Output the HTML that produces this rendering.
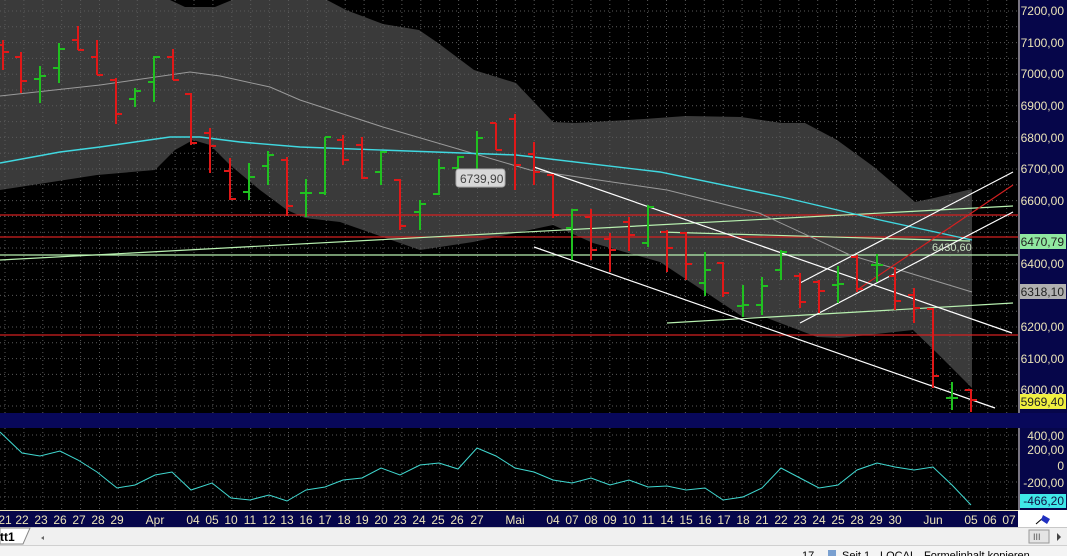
<!DOCTYPE html>
<html><head><meta charset="utf-8"><style>
html,body{margin:0;padding:0;width:1067px;height:556px;overflow:hidden;background:#000;font-family:"Liberation Sans",sans-serif}
svg{position:absolute;left:0;top:0}
.ax{font-family:"Liberation Sans",sans-serif;font-size:12px;fill:#ece4b8}
</style></head><body>
<svg width="1067" height="556" xmlns="http://www.w3.org/2000/svg">
<rect width="1067" height="556" fill="#000"/>
<!-- band -->
<polygon fill="#3a3a3a" points="0,0 170,0 185,7 215,7 232,0 327,0 346,10 383,24 419,30 438,43 474,70 516,83 553,122 575,123 644,119 686,116 741,117 782,123 805,123 837,140 874,167 915,202 934,198 972,189 972,388 937,353 913,330 840,338 817,337 767,318 743,317 660,262 593,243 553,225 473,242 420,250 340,222 305,218 287,210 260,190 230,165 210,145 193,140 175,150 155,170 97,175 0,190"/>
<g id="grid"></g>
<!-- horizontal lines -->
<line x1="0" y1="215" x2="1018" y2="215" stroke="#d42020" stroke-width="1.3"/>
<line x1="0" y1="237" x2="1018" y2="237" stroke="#d42020" stroke-width="1.3"/>
<line x1="0" y1="335" x2="1018" y2="335" stroke="#d42020" stroke-width="1.3"/>
<line x1="0" y1="255" x2="1018" y2="255" stroke="#b8f0b0" stroke-width="1.2"/>
<line x1="0" y1="260" x2="1013" y2="206" stroke="#b8f0b0" stroke-width="1.2"/>
<line x1="660" y1="232" x2="970" y2="241" stroke="#b8f0b0" stroke-width="1.2"/>
<line x1="667" y1="323" x2="1013" y2="303" stroke="#b8f0b0" stroke-width="1.2"/>
<polyline fill="none" stroke="#9a9a9a" stroke-width="1" points="0,96 100,85 190,72 220,76 270,87 300,100 383,127 530,170 667,190 759,213 850,255 972,292"/>
<polyline fill="none" stroke="#40d8e0" stroke-width="1.4" points="0,163 60,152 100,147 170,137 200,137 240,142 300,147 516,155 660,172 782,197 880,220 972,240"/>
<line x1="857" y1="290" x2="1013" y2="185" stroke="#d42020" stroke-width="1.2"/>
<line x1="534" y1="167" x2="1012" y2="333" stroke="#fff" stroke-width="1.2"/>
<line x1="534" y1="247" x2="995" y2="408" stroke="#fff" stroke-width="1.2"/>
<line x1="800" y1="283" x2="1013" y2="172" stroke="#fff" stroke-width="1.2"/>
<line x1="800" y1="323" x2="1013" y2="212" stroke="#fff" stroke-width="1.2"/>
<g id="bars"></g>
<rect x="456" y="169" width="49" height="18" rx="3" fill="#d8d8d8" stroke="#aaa"/>
<text x="460" y="183" font-size="12" fill="#444" font-family="Liberation Sans">6739,90</text>
<text x="932" y="251" font-size="11" fill="#c8e0c0" font-family="Liberation Sans">6430,60</text>
<!-- right axis -->
<rect x="1018" y="0" width="49" height="413" fill="#06064a"/>
<line x1="1019" y1="0" x2="1019" y2="413" stroke="#ece4b8"/>
<g class="ax" text-anchor="end">
<text x="1064" y="15">7200,00</text><text x="1064" y="47">7100,00</text><text x="1064" y="78">7000,00</text><text x="1064" y="110">6900,00</text><text x="1064" y="142">6800,00</text><text x="1064" y="173">6700,00</text><text x="1064" y="205">6600,00</text><text x="1064" y="268">6400,00</text><text x="1064" y="331">6200,00</text><text x="1064" y="363">6100,00</text><text x="1064" y="394">6000,00</text>
</g>
<rect x="1020" y="234" width="46" height="15" fill="#90e8a0"/><text x="1064" y="246" text-anchor="end" font-size="12" fill="#222" font-family="Liberation Sans">6470,79</text>
<rect x="1020" y="284" width="46" height="15" fill="#b0b0b0"/><text x="1064" y="296" text-anchor="end" font-size="12" fill="#222" font-family="Liberation Sans">6318,10</text>
<rect x="1020" y="394" width="46" height="15" fill="#f0f040"/><text x="1064" y="406" text-anchor="end" font-size="12" fill="#222" font-family="Liberation Sans">5969,40</text>
<!-- separator -->
<rect x="0" y="413" width="1067" height="15" fill="#08085a"/>
<!-- lower panel -->
<rect x="0" y="428" width="1018" height="82" fill="#000"/>
<g id="grid2"></g>
<polyline fill="none" stroke="#40d8d0" stroke-width="1" points="0,432 22,453 40,456 60,451 78,460 97,472 117,488 135,485 155,475 172,472 191,490 212,483 231,498 250,500 269,495 287,501 306,490 325,487 343,480 362,478 381,468 400,475 420,465 439,463 458,469 477,448 496,456 515,468 534,472 553,480 572,483 591,478 610,485 629,480 648,487 667,486 686,490 705,488 723,500 743,497 762,488 781,468 800,478 819,488 838,485 857,470 877,463 895,467 914,470 933,467 952,485 971,505"/>
<rect x="1018" y="428" width="49" height="82" fill="#06064a"/>
<line x1="1019" y1="428" x2="1019" y2="510" stroke="#ece4b8"/>
<g class="ax" text-anchor="end">
<text x="1064" y="440">400,00</text><text x="1064" y="454">200,00</text><text x="1064" y="470">0</text><text x="1064" y="487">-200,00</text>
</g>
<rect x="1020" y="494" width="46" height="14" fill="#40e8e8"/><text x="1064" y="505" text-anchor="end" font-size="12" fill="#114" font-family="Liberation Sans">-466,20</text>
<!-- date axis -->
<rect x="0" y="510" width="1018" height="17" fill="#06064a"/>
<line x1="0" y1="510.5" x2="1018" y2="510.5" stroke="#ece4b8"/>
<g class="ax" text-anchor="middle" font-size="12">
<text x="5" y="524">21</text><text x="22" y="524">22</text><text x="41" y="524">23</text><text x="60" y="524">26</text><text x="79" y="524">27</text><text x="98" y="524">28</text><text x="117" y="524">29</text><text x="155" y="524">Apr</text><text x="193" y="524">04</text><text x="212" y="524">05</text><text x="231" y="524">10</text><text x="250" y="524">11</text><text x="269" y="524">12</text><text x="287" y="524">13</text><text x="306" y="524">16</text><text x="325" y="524">17</text><text x="344" y="524">18</text><text x="362" y="524">19</text><text x="381" y="524">20</text><text x="400" y="524">23</text><text x="419" y="524">24</text><text x="438" y="524">25</text><text x="457" y="524">26</text><text x="477" y="524">27</text><text x="515" y="524">Mai</text><text x="553" y="524">04</text><text x="572" y="524">07</text><text x="591" y="524">08</text><text x="610" y="524">09</text><text x="629" y="524">10</text><text x="648" y="524">11</text><text x="667" y="524">14</text><text x="686" y="524">15</text><text x="705" y="524">16</text><text x="724" y="524">17</text><text x="743" y="524">18</text><text x="762" y="524">21</text><text x="781" y="524">22</text><text x="800" y="524">23</text><text x="819" y="524">24</text><text x="838" y="524">25</text><text x="857" y="524">28</text><text x="876" y="524">29</text><text x="895" y="524">30</text><text x="933" y="524">Jun</text><text x="971" y="524">05</text><text x="990" y="524">06</text><text x="1009" y="524">07</text>
</g>
<rect x="1018" y="510" width="49" height="17" fill="#fff"/>
<line x1="1036" y1="524" x2="1044" y2="517" stroke="#000"/>
<polygon points="1043,515 1050,519 1047,524 1041,520" fill="#2030c0"/>
<!-- scroll row -->
<rect x="0" y="527" width="1067" height="18" fill="#f0f0f0"/>
<line x1="0" y1="527.5" x2="1067" y2="527.5" stroke="#c8c8c8"/>
<polygon points="0,528 30,528 23,544 0,544" fill="#fff" stroke="#888"/>
<text x="0" y="541" font-size="12" font-weight="bold" fill="#000" font-family="Liberation Sans">tt1</text>
<polygon points="44,536 41,538 44,540" fill="#666"/>
<rect x="1029" y="530" width="20" height="13" fill="#e4e4e4" stroke="#999"/>
<text x="1033" y="540" font-size="9" fill="#555" font-family="Liberation Sans">III</text>
<polygon points="1057,533 1061,537 1057,541" fill="#444"/>
<rect x="0" y="545" width="1067" height="11" fill="#f4f4f4"/>
<line x1="0" y1="545.5" x2="1067" y2="545.5" stroke="#d0d0d0"/>
<g font-size="11" fill="#000" font-family="Liberation Sans">
<text x="802" y="559">17</text><rect x="828" y="550" width="8" height="8" fill="#7aa0d0"/><text x="842" y="559">Seit 1</text><text x="880" y="559">LOCAL</text><text x="924" y="559">Formelinhalt kopieren</text>
</g>
</svg>
<script>
var ns="http://www.w3.org/2000/svg";
function el(p,t,a){var e=document.createElementNS(ns,t);for(var k in a)e.setAttribute(k,a[k]);p.appendChild(e);return e;}
var g=document.getElementById("grid");
for(var x=5;x<1018;x+=18.9){el(g,"line",{x1:x,y1:0,x2:x,y2:413,stroke:"#5a5a5a","stroke-dasharray":"1,3","stroke-width":1});}
for(var y=11;y<413;y+=15.8){el(g,"line",{x1:0,y1:y,x2:1018,y2:y,stroke:"#5a5a5a","stroke-dasharray":"1,3","stroke-width":1});}
var g2=document.getElementById("grid2");
for(var x=5;x<1018;x+=18.9){el(g2,"line",{x1:x,y1:428,x2:x,y2:510,stroke:"#5a5a5a","stroke-dasharray":"1,3"});}
[435,449,465,482,497].forEach(function(y){el(g2,"line",{x1:0,y1:y,x2:1018,y2:y,stroke:"#5a5a5a","stroke-dasharray":"1,3"});});
var R="#e01818",G="#20c020";
var B=[[3,40,70,45,52,R],[21,52,93,57,81,R],[40,66,103,79,76,G],[59,43,83,68,49,G],[78,26,50,40,50,R],[97,40,75,57,75,R],[116,78,124,80,114,R],[135,88,107,99,91,G],[154,56,102,82,57,G],[173,49,80,57,80,R],[191,93,145,94,143,R],[210,128,173,133,146,R],[230,158,200,171,199,R],[249,163,200,192,177,G],[268,151,185,166,155,G],[287,157,216,160,206,R],[306,179,217,193,193,G],[325,137,195,193,137,G],[343,135,165,140,160,R],[362,137,179,145,178,R],[381,151,185,172,152,G],[400,179,230,180,226,R],[420,200,230,212,204,G],[439,159,195,194,168,G],[458,156,185,168,157,G],[477,131,183,182,138,G],[496,123,150,123,150,R],[515,114,190,119,165,R],[534,142,185,154,172,R],[553,174,218,175,215,R],[572,209,260,228,210,G],[591,209,260,217,250,R],[610,233,272,239,250,R],[629,217,251,222,235,R],[648,205,247,243,207,G],[667,230,272,232,248,R],[686,232,280,233,264,R],[705,252,296,283,270,G],[723,262,297,263,293,R],[743,285,317,306,305,G],[762,277,315,305,286,G],[781,250,280,270,252,G],[800,273,308,276,302,R],[819,280,313,282,291,R],[838,266,303,285,284,G],[857,255,292,257,289,R],[877,254,282,265,265,G],[895,267,310,276,301,R],[914,288,323,295,308,R],[933,308,388,309,376,R],[952,382,410,398,398,G],[971,389,412,390,400,R]];
var b=document.getElementById("bars");
B.forEach(function(d){var x=d[0];
el(b,"line",{x1:x,y1:d[1],x2:x,y2:d[2],stroke:d[5],"stroke-width":2});
el(b,"line",{x1:x-6,y1:d[3],x2:x,y2:d[3],stroke:d[5],"stroke-width":2});
el(b,"line",{x1:x,y1:d[4],x2:x+6,y2:d[4],stroke:d[5],"stroke-width":2});});
</script>
</body></html>
